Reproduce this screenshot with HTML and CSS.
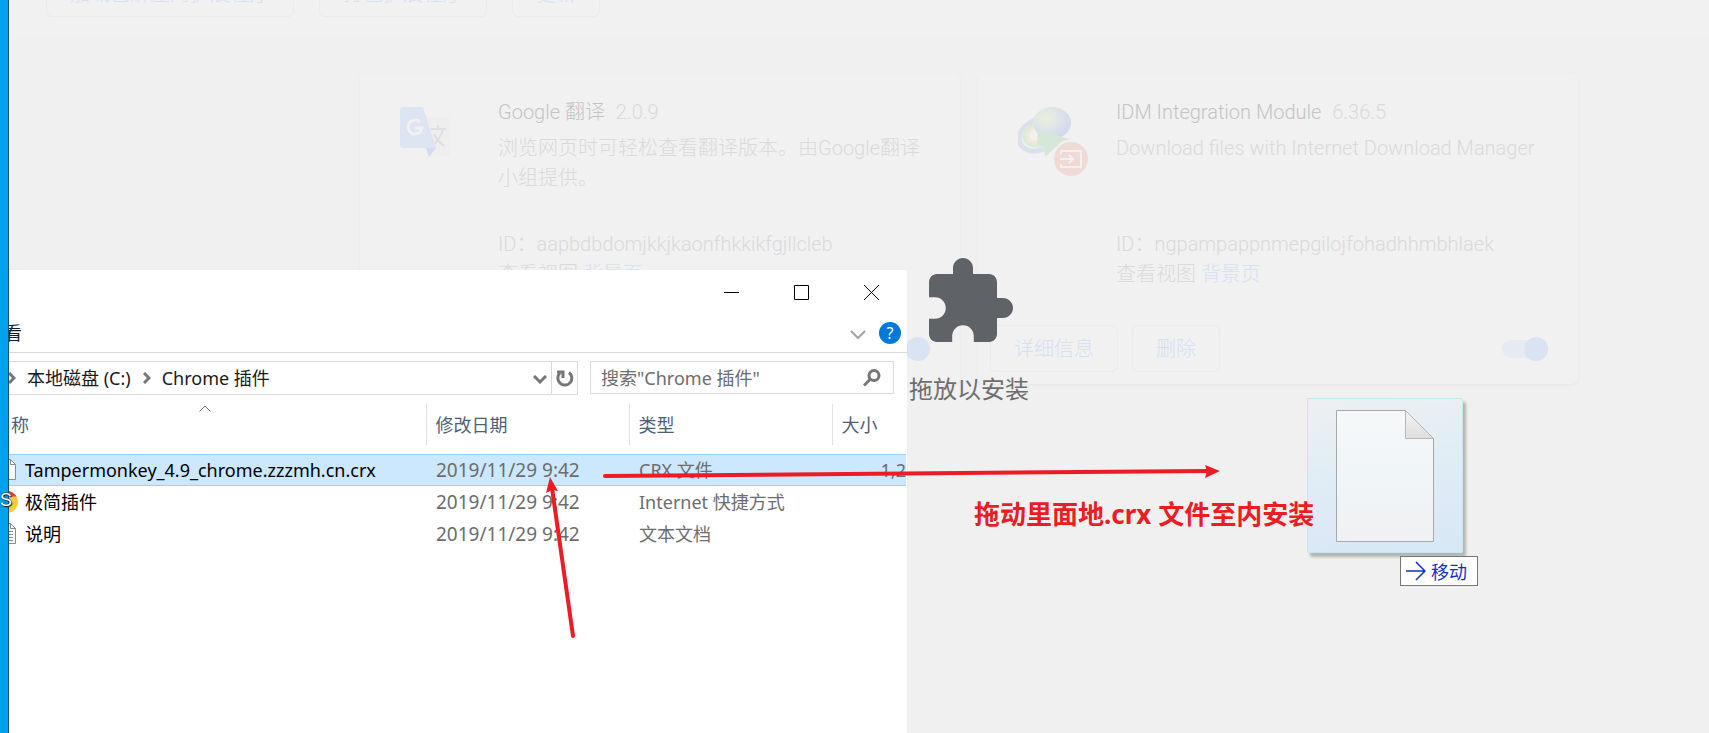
FILE: index.html
```html
<!DOCTYPE html>
<html lang="zh-CN">
<head>
    <meta charset="UTF-8">
    <meta name="viewport" content="width=device-width, initial-scale=1.0">
    <title>扩展程序</title>
    <link rel="stylesheet" href="styles.css">
</head>
<body>
    <div class="desktop">
        <div class="wallpaper"><span class="cursor-letter">S</span></div>

        <main class="browser">
            <div class="page">
                <div class="toolbar">
                    <button type="button" class="btn">加载已解压的扩展程序</button>
                    <button type="button" class="btn">打包扩展程序</button>
                    <button type="button" class="btn">更新</button>
                </div>

                <div class="cards">
                    <section class="card">
                        <div class="card-body">
                            <div class="card-icon">
                                <svg width="50" height="52" viewBox="0 0 50 52">
                                    <path d="M20 10h27a3 3 0 0 1 3 3v33a3 3 0 0 1-3 3H30z" fill="#eeeeee"/>
                                    <path d="M31 22h15M38 18v4M43 22c-2 8-6 13-11 17M34 27c3 6 6 9 10 12" fill="none" stroke="#dddfe2" stroke-width="2"/>
                                    <path d="M3 0h20l13 41H3a3 3 0 0 1-3-3V3a3 3 0 0 1 3-3z" fill="#dde5f3"/>
                                    <path d="M26 41h10l-7 9z" fill="#d5dbee"/>
                                    <path d="M20 15a7 7 0 1 0 2 6h-7" fill="none" stroke="#f1f1f1" stroke-width="3"/>
                                </svg>
                            </div>
                            <div class="card-text">
                                <h2>Google 翻译 <span class="version">2.0.9</span></h2>
                                <p class="desc">浏览网页时可轻松查看翻译版本。由Google翻译小组提供。</p>
                                <p>ID：aapbdbdomjkkjkaonfhkkikfgjllcleb</p>
                                <p>查看视图 <a href="#">背景页</a></p>
                            </div>
                        </div>
                        <div class="card-actions">
                            <button type="button" class="btn">详细信息</button>
                            <button type="button" class="btn">删除</button>
                            <input type="checkbox" class="switch" aria-label="启用 Google 翻译" checked>
                        </div>
                    </section>

                    <section class="card">
                        <div class="card-body">
                            <div class="card-icon">
                                <svg width="72" height="72" viewBox="0 0 72 72">
                                    <defs>
                                        <radialGradient id="globe" cx="35%" cy="35%" r="70%">
                                            <stop offset="0" stop-color="#ecefd9"/>
                                            <stop offset="0.5" stop-color="#dde5e9"/>
                                            <stop offset="1" stop-color="#cfd8ea"/>
                                        </radialGradient>
                                    </defs>
                                    <path d="M17 13C6 18 0 26 1 33c2 10 14 14 25 9" fill="none" stroke="#dae0ee" stroke-width="5"/>
                                    <path d="M17 17C9 21 5 26 6 31c2 7 11 9 19 7" fill="none" stroke="#ddebd8" stroke-width="4"/>
                                    <path d="M17 20c-6 3-8 7-7 11 2 4 8 5 14 4" fill="none" stroke="#f2e8d6" stroke-width="3"/>
                                    <ellipse cx="34" cy="16" rx="19" ry="16" fill="url(#globe)"/>
                                    <path d="M20 23l32 9-9 3-16 15-1-10-7-2z" fill="#d6e6d8"/>
                                    <circle cx="53" cy="52" r="17" fill="#efdad6"/>
                                    <path d="M43 47v-3h20v16H43v-3M42 52h13M51 48l4 4-4 4" fill="none" stroke="#f3f0ef" stroke-width="2"/>
                                </svg>
                            </div>
                            <div class="card-text">
                                <h2>IDM Integration Module <span class="version">6.36.5</span></h2>
                                <p class="desc">Download files with Internet Download Manager</p>
                                <p>ID：ngpampappnmepgilojfohadhhmbhlaek</p>
                                <p>查看视图 <a href="#">背景页</a></p>
                            </div>
                        </div>
                        <div class="card-actions">
                            <button type="button" class="btn">详细信息</button>
                            <button type="button" class="btn">删除</button>
                            <input type="checkbox" class="switch" aria-label="启用 IDM Integration Module" checked>
                        </div>
                    </section>
                </div>

                <div class="drop-overlay">
                    <svg width="96" height="96" viewBox="0 0 24 24" fill="#5f6368">
                        <path d="M20.5 11H19V7c0-1.1-.9-2-2-2h-4V3.5C13 2.12 11.88 1 10.5 1S8 2.12 8 3.5V5H4c-1.1 0-1.99.9-1.99 2v3.8H3.5c1.49 0 2.7 1.21 2.7 2.7s-1.21 2.7-2.7 2.7H2V20c0 1.1.9 2 2 2h3.8v-1.5c0-1.49 1.21-2.7 2.7-2.7s2.7 1.21 2.7 2.7V22H17c1.1 0 2-.9 2-2v-4h1.5c1.38 0 2.5-1.12 2.5-2.5S21.88 11 20.5 11z"/>
                    </svg>
                    <p>拖放以安装</p>
                </div>
            </div>
        </main>

        <!-- Explorer window -->
        <section class="explorer">
            <div class="titlebar">
                <button type="button" aria-label="最小化">
                    <svg width="15" height="15" viewBox="0 0 15 15"><path d="M0 7.5h15"/></svg>
                </button>
                <button type="button" aria-label="最大化">
                    <svg width="15" height="15" viewBox="0 0 15 15"><path d="M.5.5h14v14H.5z"/></svg>
                </button>
                <button type="button" aria-label="关闭">
                    <svg width="15" height="15" viewBox="0 0 15 15"><path d="M0 0l15 15M15 0L0 15"/></svg>
                </button>
            </div>

            <div class="ribbon">
                <button type="button" class="tab">查看</button>
                <button type="button" class="collapse" aria-label="展开功能区">
                    <svg width="16" height="10" viewBox="0 0 16 10"><path d="M1 1l7 7 7-7" fill="none" stroke="#a0a0a0" stroke-width="2"/></svg>
                </button>
                <button type="button" class="help" aria-label="帮助">?</button>
            </div>

            <div class="nav">
                <div class="address">
                    <svg width="8" height="12" viewBox="0 0 8 12"><path d="M1 1l5 5-5 5"/></svg>
                    <button type="button" class="crumb">本地磁盘 (C:)</button>
                    <svg width="8" height="12" viewBox="0 0 8 12"><path d="M1 1l5 5-5 5"/></svg>
                    <button type="button" class="crumb">Chrome 插件</button>
                    <button type="button" class="history" aria-label="以前的位置">
                        <svg width="14" height="10" viewBox="0 0 14 10"><path d="M1 1l6 6 6-6"/></svg>
                    </button>
                    <button type="button" class="refresh" aria-label="刷新">
                        <svg width="18" height="18" viewBox="0 0 18 18"><path d="M13 3.500A7 7 0 1 1 4 4"/><path d="M1 3h6v6"/></svg>
                    </button>
                </div>
                <div class="search">
                    <input type="text" aria-label="搜索" placeholder="搜索&quot;Chrome 插件&quot;">
                    <svg width="18" height="18" viewBox="0 0 18 18"><circle cx="11" cy="6.500" r="5"/><path d="M7 10.500L1 16.500"/></svg>
                </div>
            </div>

            <table class="files">
                <colgroup>
                    <col class="col-name">
                    <col class="col-date">
                    <col class="col-type">
                    <col>
                </colgroup>
                <thead>
                    <tr>
                        <th>
                            名称
                            <svg class="sort" width="12" height="7" viewBox="0 0 12 7"><path d="M.5 6.500L6 1l5.500 5.500" fill="none" stroke="#6d6d6d"/></svg>
                        </th>
                        <th>修改日期</th>
                        <th>类型</th>
                        <th>大小</th>
                    </tr>
                </thead>
                <tbody>
                    <tr class="selected">
                        <td class="name">
                            <svg width="24" height="24" viewBox="0 0 24 24"><path d="M2.500 1.500h13l5 5v15h-18z" fill="#fafafa" stroke="#8a8a8a"/><path d="M15.500 1.500v5h5" fill="none" stroke="#8a8a8a"/></svg>
                            <span>Tampermonkey_4.9_chrome.zzzmh.cn.crx</span>
                        </td>
                        <td class="date">2019/11/29 9:42</td>
                        <td>CRX 文件</td>
                        <td class="size">1,2</td>
                    </tr>
                    <tr>
                        <td class="name">
                            <svg width="24" height="24" viewBox="0 0 24 24">
                                <circle cx="12" cy="12" r="11" fill="#fc3"/>
                                <path d="M2.500 6.500A11 11 0 0 1 21.500 6.500H12L7 15z" fill="#db4437"/>
                                <path d="M2.500 6.500L7.500 15l4.500 3-2 5A11 11 0 0 1 2.500 6.500z" fill="#0f9d58"/>
                                <circle cx="12" cy="12" r="5" fill="#4285f4" stroke="#fff"/>
                            </svg>
                            <span>极简插件</span>
                        </td>
                        <td class="date">2019/11/29 9:42</td>
                        <td>Internet 快捷方式</td>
                        <td></td>
                    </tr>
                    <tr>
                        <td class="name">
                            <svg width="24" height="24" viewBox="0 0 24 24"><path d="M2.500 1.500h13l5 5v15h-18z" fill="#fafafa" stroke="#8a8a8a"/><path d="M15.500 1.500v5h5M5 9.500h13M5 12.500h13M5 15.500h13M5 18.500h13" fill="none" stroke="#8a8a8a"/></svg>
                            <span>说明</span>
                        </td>
                        <td class="date">2019/11/29 9:42</td>
                        <td>文本文档</td>
                        <td></td>
                    </tr>
                </tbody>
            </table>
        </section>

        <!-- File being dragged -->
        <div class="drag-ghost">
            <svg width="100" height="134" viewBox="0 0 100 134">
                <defs>
                    <linearGradient id="fold" x1="0" y1="0" x2="0" y2="1">
                        <stop offset="0" stop-color="#f4f4f4"/>
                        <stop offset="1" stop-color="#dedede"/>
                    </linearGradient>
                    <linearGradient id="sheet" x1="0" y1="0" x2="0" y2="1">
                        <stop offset="0" stop-color="#f6f8f9"/>
                        <stop offset="0.500" stop-color="#f0f5f7"/>
                        <stop offset="1" stop-color="#f0f1f2"/>
                    </linearGradient>
                </defs>
                <path d="M1.500 1.500h69l28 28v103h-97z" fill="url(#sheet)" stroke="#a6a9ab"/>
                <path d="M70.500 1.500l28 28h-28z" fill="url(#fold)" stroke="#b4b6b8"/>
            </svg>
        </div>
        <div class="drag-tip">
            <svg width="20" height="20" viewBox="0 0 20 20"><path d="M0 10h19M10 1l9 9-9 9" fill="none" stroke="#0a32c8" stroke-width="1.500"/></svg>
            移动
        </div>

        <!-- Red marks -->
        <svg class="marks" width="100%" height="100%">
            <g stroke="#ed1c24" stroke-width="4" stroke-linecap="round">
                <path d="M605 476L1208 471"/>
                <path d="M573 636L552 488"/>
            </g>
            <g fill="#ed1c24">
                <path d="M1220 471l-15-6 2 6-2 7z"/>
                <path d="M550 477l-4 16 6-3 6 1z"/>
            </g>
        </svg>
        <p class="mark-text">拖动里面地.crx 文件至内安装</p>
    </div>
</body>
</html>
```

FILE: styles.css
```css
* {
    margin: 0;
    padding: 0;
    box-sizing: border-box;
}

body {
    background: #f0f0f0;
    font-family: "Noto Sans", "Noto Sans CJK SC", sans-serif;
    font-size: 18px;
    overflow: hidden;
}

button {
    background: none;
    border: none;
    font: inherit;
    color: inherit;
    cursor: pointer;
}

.desktop {
    position: relative;
    display: flex;
    height: 100vh;
    overflow: hidden;
}

.wallpaper {
    flex: none;
    width: 9px;
    background: #00a2ed;
    border-right: 1px solid #14506e;
}

.cursor-letter {
    position: absolute;
    z-index: 3;
    left: 0;
    top: 488px;
    color: #fff;
    font-family: "Liberation Sans", sans-serif;
    font-size: 18px;
    line-height: 24px;
    text-shadow: 0 0 2px #123, 1px 1px 1px #123;
}

/* Extensions page, dimmed while a file is dragged over it */
.browser {
    flex: 1;
    min-width: 0;
}

.page {
    position: relative;
    margin-right: -220px;
    font-family: Roboto, "Noto Sans CJK SC", sans-serif;
    font-size: 20px;
    font-weight: 300;
    line-height: 30px;
    color: #dadada;
}

.toolbar {
    display: flex;
    gap: 25px;
    margin-top: -30px;
    padding: 0 37px 22px;
    background: #f1f1f1;
    border-bottom: 2px solid #efefef;
}

.btn {
    height: 47px;
    padding: 0 23px;
    border: 1px solid #ebebeb;
    border-radius: 6px;
    color: #d6e0f3;
    white-space: nowrap;
}

.cards {
    display: grid;
    grid-template-columns: 600px 600px;
    justify-content: center;
    gap: 18px;
    padding-top: 32px;
}

.card {
    padding: 24px 12px 12px;
    background: #f1f1f1;
    border-radius: 6px;
    box-shadow: 0 1px 3px #e6e6e6;
}

.card-body {
    display: flex;
    margin-bottom: 36px;
}

.card-icon {
    flex: none;
    width: 126px;
    padding: 10px 0 0 28px;
}

.card-text {
    width: 430px;
}

.card h2 {
    margin-bottom: 6px;
    font-size: 20px;
    font-weight: 300;
    color: #c4c4c4;
}

.version {
    margin-left: 6px;
    color: #dadada;
}

.card .desc {
    min-height: 96px;
}

.card a {
    color: #d8e0f2;
    text-decoration: none;
}

.card-actions {
    display: flex;
    align-items: center;
    gap: 14px;
}

.switch {
    position: relative;
    appearance: none;
    width: 46px;
    height: 18px;
    margin: 0 18px 0 auto;
    border-radius: 9px;
    background: #e6eaf2;
}

.switch::after {
    content: "";
    position: absolute;
    right: 0;
    top: -3px;
    width: 24px;
    height: 24px;
    border-radius: 50%;
    background: #dae3f2;
}

.drop-overlay {
    position: absolute;
    inset: 284px 0 auto;
    text-align: center;
    font-size: 24px;
    font-weight: 400;
    color: #6e6e6e;
}

.drop-overlay svg {
    display: block;
    margin: 0 auto 25px;
}

/* Explorer */
.explorer {
    position: absolute;
    left: 9px;
    top: 270px;
    bottom: 0;
    width: 898px;
    background: #fff;
    color: #1a1a1a;
    line-height: 24px;
    overflow: hidden;
}

.titlebar {
    display: flex;
    justify-content: flex-end;
    height: 44px;
    padding-right: 1px;
}

.titlebar button {
    width: 70px;
    padding-top: 2px;
}

.titlebar svg {
    fill: none;
    stroke: #000;
}

.ribbon {
    display: flex;
    align-items: center;
    gap: 13px;
    height: 39px;
    margin-left: -23px;
    padding-right: 6px;
    border-bottom: 1px solid #d9d9d9;
}

.collapse {
    margin-left: auto;
}

.help {
    width: 22px;
    height: 22px;
    border-radius: 50%;
    background: #0078d7;
    color: #fff;
    font-size: 16px;
    line-height: 22px;
}

.nav {
    display: flex;
    gap: 12px;
    margin: 8px 13px 0 -2px;
}

.nav svg {
    flex: none;
    fill: none;
    stroke: #767676;
    stroke-width: 3;
}

.address {
    flex: 1;
    display: flex;
    align-items: center;
    height: 34px;
    border: 1px solid #d9d9d9;
}

.crumb {
    padding: 0 12px 0 11px;
    white-space: nowrap;
}

.history {
    margin-left: auto;
    padding: 0 4px;
}

.refresh {
    display: flex;
    align-items: center;
    justify-content: center;
    width: 26px;
    height: 32px;
    border-left: 1px solid #d9d9d9;
}

.search {
    display: flex;
    align-items: center;
    width: 304px;
    height: 33px;
    padding: 0 12px 0 10px;
    border: 1px solid #d9d9d9;
}

.search input {
    flex: 1;
    min-width: 0;
    border: none;
    outline: none;
    font: inherit;
}

.search input::placeholder {
    color: #6d6d6d;
}

.files {
    width: 922px;
    margin: 9px 0 0 -25px;
    border-collapse: collapse;
    table-layout: fixed;
}

.col-name {
    width: 442px;
}

.col-date,
.col-type {
    width: 203px;
}

.files th {
    position: relative;
    height: 41px;
    padding: 0 9px;
    border-right: 1px solid #e2e2e2;
    font-weight: 400;
    text-align: left;
    color: #4c607a;
}

.files th:last-child {
    border-right: none;
}

.sort {
    position: absolute;
    left: 215px;
    top: 1px;
}

.files tbody::before {
    content: "";
    display: block;
    height: 9px;
}

.files td {
    height: 32px;
    padding: 0 10px;
    color: #6d6d6d;
    white-space: nowrap;
}

.files .name {
    display: flex;
    align-items: center;
    gap: 6px;
    padding-left: 11px;
    color: #000;
}

.files .date {
    font-size: 19px;
}

.files .size {
    padding: 0;
    text-align: right;
}

.files .selected {
    background: #cce8ff;
    box-shadow: inset 0 1px #99d1ff, inset 0 -1px #99d1ff;
}

/* Drag image and its hint */
.drag-ghost {
    position: absolute;
    left: 1307px;
    top: 398px;
    padding: 10px 27px 9px 27px;
    border: 1px solid #c5e6f5;
    border-radius: 2px;
    background: linear-gradient(170deg, #edf0f2, #e0edf5 45%, #dce8f6 80%, #d6e9f3);
    box-shadow: 3px 4px 3px #b4b4b0;
}

.drag-ghost svg {
    display: block;
}

.drag-tip {
    position: absolute;
    left: 1400px;
    top: 556px;
    display: flex;
    align-items: center;
    gap: 5px;
    height: 30px;
    padding: 0 10px 0 5px;
    border: 1px solid #767676;
    background: #fff;
    color: #0a32c8;
}

.marks {
    position: absolute;
    left: 0;
    top: 0;
    pointer-events: none;
}

.mark-text {
    position: absolute;
    left: 974px;
    top: 496px;
    font-size: 26px;
    font-weight: 700;
    line-height: 36px;
    color: #ed1c24;
    white-space: nowrap;
}
```
